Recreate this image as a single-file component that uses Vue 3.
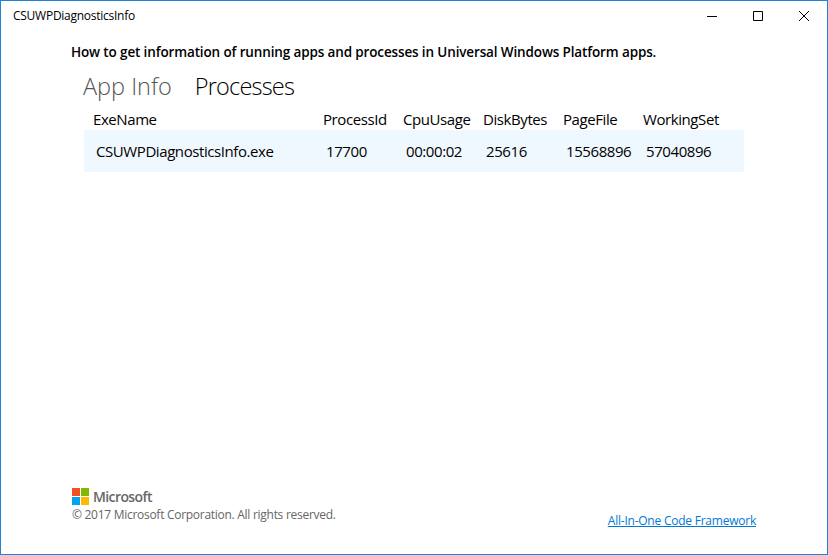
<script setup>
const tabs = [
  { label: 'App Info', name: 'info', active: false },
  { label: 'Processes', name: 'processes', active: true },
]
const columns = ['ExeName', 'ProcessId', 'CpuUsage', 'DiskBytes', 'PageFile', 'WorkingSet']
const processes = [
  ['CSUWPDiagnosticsInfo.exe', '17700', '00:00:02', '25616', '15568896', '57040896'],
]
</script>

<template>
  <div class="window">
    <header class="titlebar">
      <span class="title">CSUWPDiagnosticsInfo</span>
      <div class="controls">
        <svg class="control" viewBox="0 0 46 30"><path d="M18 15.5h10" /></svg>
        <svg class="control" viewBox="0 0 46 30"><path d="M18.5 10.5h9v9h-9z" /></svg>
        <svg class="control" viewBox="0 0 46 30"><path d="M18 10l10 10M28 10l-10 10" /></svg>
      </div>
    </header>

    <main class="content">
      <h1 class="heading">How to get information of running apps and processes in Universal Windows Platform apps.</h1>
      <nav class="tabs">
        <span v-for="t in tabs" :key="t.name" class="tab" :class="{ active: t.active }">{{ t.label }}</span>
      </nav>
      <div class="columns">
        <span v-for="c in columns" :key="c">{{ c }}</span>
      </div>
      <div v-for="p in processes" :key="p[1]" class="row">
        <span v-for="(v, i) in p" :key="i">{{ v }}</span>
      </div>
    </main>

    <footer class="footer">
      <div>
        <div class="brand">
          <svg class="logo" viewBox="0 0 17 17">
            <path fill="#f25022" d="M0 0h8v8H0z" />
            <path fill="#7fba00" d="M9 0h8v8H9z" />
            <path fill="#00a4ef" d="M0 9h8v8H0z" />
            <path fill="#ffb900" d="M9 9h8v8H9z" />
          </svg>
          <span class="brand-name">Microsoft</span>
        </div>
        <div class="copyright">© 2017 Microsoft Corporation. All rights reserved.</div>
      </div>
      <a class="link">All-In-One Code Framework</a>
    </footer>
  </div>
</template>

<style>
body { background: #fff; }
</style>

<style scoped>
.window {
  box-sizing: border-box;
  width: 828px;
  height: 555px;
  border: 1px solid #2283d5;
  background: #fff;
  color: #000;
  font-family: "Open Sans", "Noto Sans", sans-serif;
  display: flex;
  flex-direction: column;
  overflow: hidden;
  white-space: nowrap;
}
.titlebar {
  display: flex;
  justify-content: space-between;
  height: 30px;
}
.title { padding-left: 12px; font-size: 12px; line-height: 30px; letter-spacing: -0.26px; }
.controls { display: flex; }
.control { width: 46px; height: 30px; fill: none; stroke: #000; stroke-width: 1; }
.content { padding: 10px 83px 0 70px; flex: 1; }
.heading { margin: 0; font-size: 13.5px; font-weight: 600; line-height: 22px; letter-spacing: -0.135px; }
.tabs {
  display: flex;
  gap: 23px;
  padding: 5px 0 0 12px;
  height: 31px;
  font-size: 23.5px;
  line-height: 36px;
  font-weight: 300;
}
.tab { color: #555; letter-spacing: 0; }
.tab.active { color: #000; letter-spacing: -0.8px; }
.columns, .row {
  display: grid;
  grid-template-columns: 230px repeat(5, 80px);
  font-size: 15px;
  letter-spacing: -0.42px;
}
.columns { padding-left: 22px; height: 31px; line-height: 41px; }
.row {
  box-sizing: border-box;
  margin-left: 13px;
  width: 660px;
  height: 42px;
  padding-left: 12px;
  line-height: 43px;
  background: #f0f8ff;
}
.footer {
  display: flex;
  justify-content: space-between;
  height: 66px;
  padding: 0 71px;
  font-size: 12px;
}
.brand { display: flex; align-items: center; gap: 4px; height: 17px; }
.logo { width: 17px; height: 17px; }
.brand-name { font-size: 14px; font-weight: 600; color: #666; letter-spacing: -0.6px; }
.copyright { color: #666; line-height: 20px; letter-spacing: -0.28px; }
.link { color: #0078d7; text-decoration: underline; line-height: 20px; padding-top: 23px; letter-spacing: -0.23px; }
</style>
